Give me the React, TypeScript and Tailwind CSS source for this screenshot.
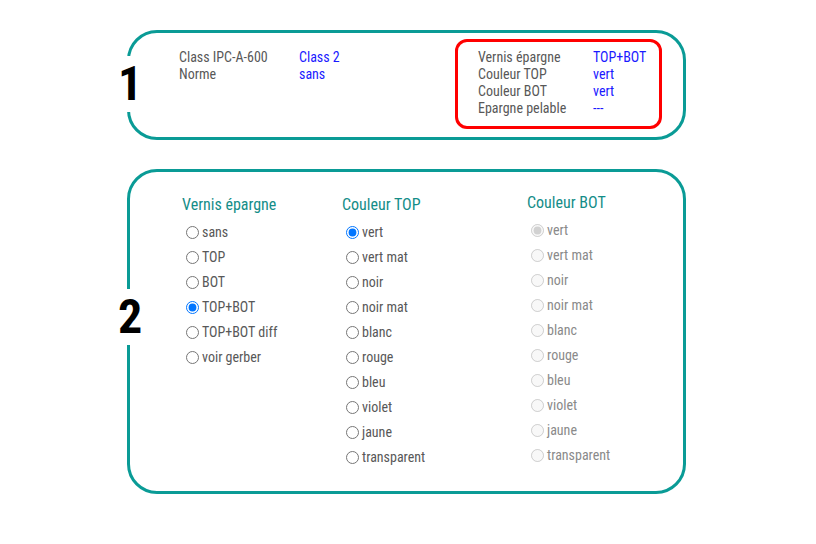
import React from "react";

const font = { fontFamily: '"Roboto Condensed", Roboto, "Liberation Sans", sans-serif' };

const vernis = ["sans", "TOP", "BOT", "TOP+BOT", "TOP+BOT diff", "voir gerber"];
const couleurs = ["vert", "vert mat", "noir", "noir mat", "blanc", "rouge", "bleu", "violet", "jaune", "transparent"];

function RadioList({
  name,
  options,
  checked,
  disabled = false,
}: {
  name: string;
  options: string[];
  checked: string;
  disabled?: boolean;
}) {
  return (
    <div className="flex flex-col">
      {options.map((o) => (
        <label key={o} className="flex h-[25px] items-center">
          <input
            type="radio"
            name={name}
            defaultChecked={o === checked}
            disabled={disabled}
            className="m-0 ml-[4px] size-[13px]"
          />
          <span
            className={`ml-[3px] text-[14px] ${disabled ? "text-[#8a8a8a]" : "text-[#585858]"}`}
          >
            {o}
          </span>
        </label>
      ))}
    </div>
  );
}

function Column({ title, children, className = "" }: { title: string; children: React.ReactNode; className?: string }) {
  return (
    <div className={className}>
      <h3 className="mb-[5px] h-[20px] text-[16px] leading-[20px] text-[#148d88]">{title}</h3>
      {children}
    </div>
  );
}

export default function App() {
  return (
    <div className="min-h-[544px] w-[816px] bg-white pt-[30px]" style={font}>
      <div className="ml-[127px] flex w-[559px] flex-col gap-[29px]">
        {/* résumé */}
        <div className="relative flex h-[110px] items-start justify-between rounded-[30px] border-[3px] border-[#0a9b96] pl-[49px] pr-[21px] pt-[6px]">
          <span className="absolute left-[-12px] top-[23px] bg-white py-[2px] text-[48px] font-bold leading-[52px] text-black">
            1
          </span>
          <div className="grid grid-cols-[120px_auto] pt-[10px] text-[14px] leading-[17px]">
            <span className="text-[#585858]">Class IPC-A-600</span>
            <span className="text-[#1a1aff]">Class 2</span>
            <span className="text-[#585858]">Norme</span>
            <span className="text-[#1a1aff]">sans</span>
          </div>
          <div className="h-[90px] w-[207px] rounded-[12px] border-[3px] border-[#ff0000] pl-[20px] pt-[7px]">
            <div className="grid grid-cols-[115px_auto] text-[14px] leading-[17px]">
              <span className="text-[#585858]">Vernis épargne</span>
              <span className="text-[#1a1aff]">TOP+BOT</span>
              <span className="text-[#585858]">Couleur TOP</span>
              <span className="text-[#1a1aff]">vert</span>
              <span className="text-[#585858]">Couleur BOT</span>
              <span className="text-[#1a1aff]">vert</span>
              <span className="text-[#585858]">Epargne pelable</span>
              <span className="text-[#1a1aff]">---</span>
            </div>
          </div>
        </div>

        {/* choix */}
        <div className="relative flex h-[325px] items-start rounded-[30px] border-[3px] border-[#0a9b96] pl-[52px] pt-[23px]">
          <span className="absolute left-[-12px] top-[117px] bg-white py-[2px] text-[48px] font-bold leading-[52px] text-black">
            2
          </span>
          <Column title="Vernis épargne" className="w-[160px]">
            <RadioList name="vernis" options={vernis} checked="TOP+BOT" />
          </Column>
          <Column title="Couleur TOP" className="w-[185px]">
            <RadioList name="top" options={couleurs} checked="vert" />
          </Column>
          <Column title="Couleur BOT" className="-mt-[2px]">
            <RadioList name="bot" options={couleurs} checked="vert" disabled />
          </Column>
        </div>
      </div>
    </div>
  );
}
